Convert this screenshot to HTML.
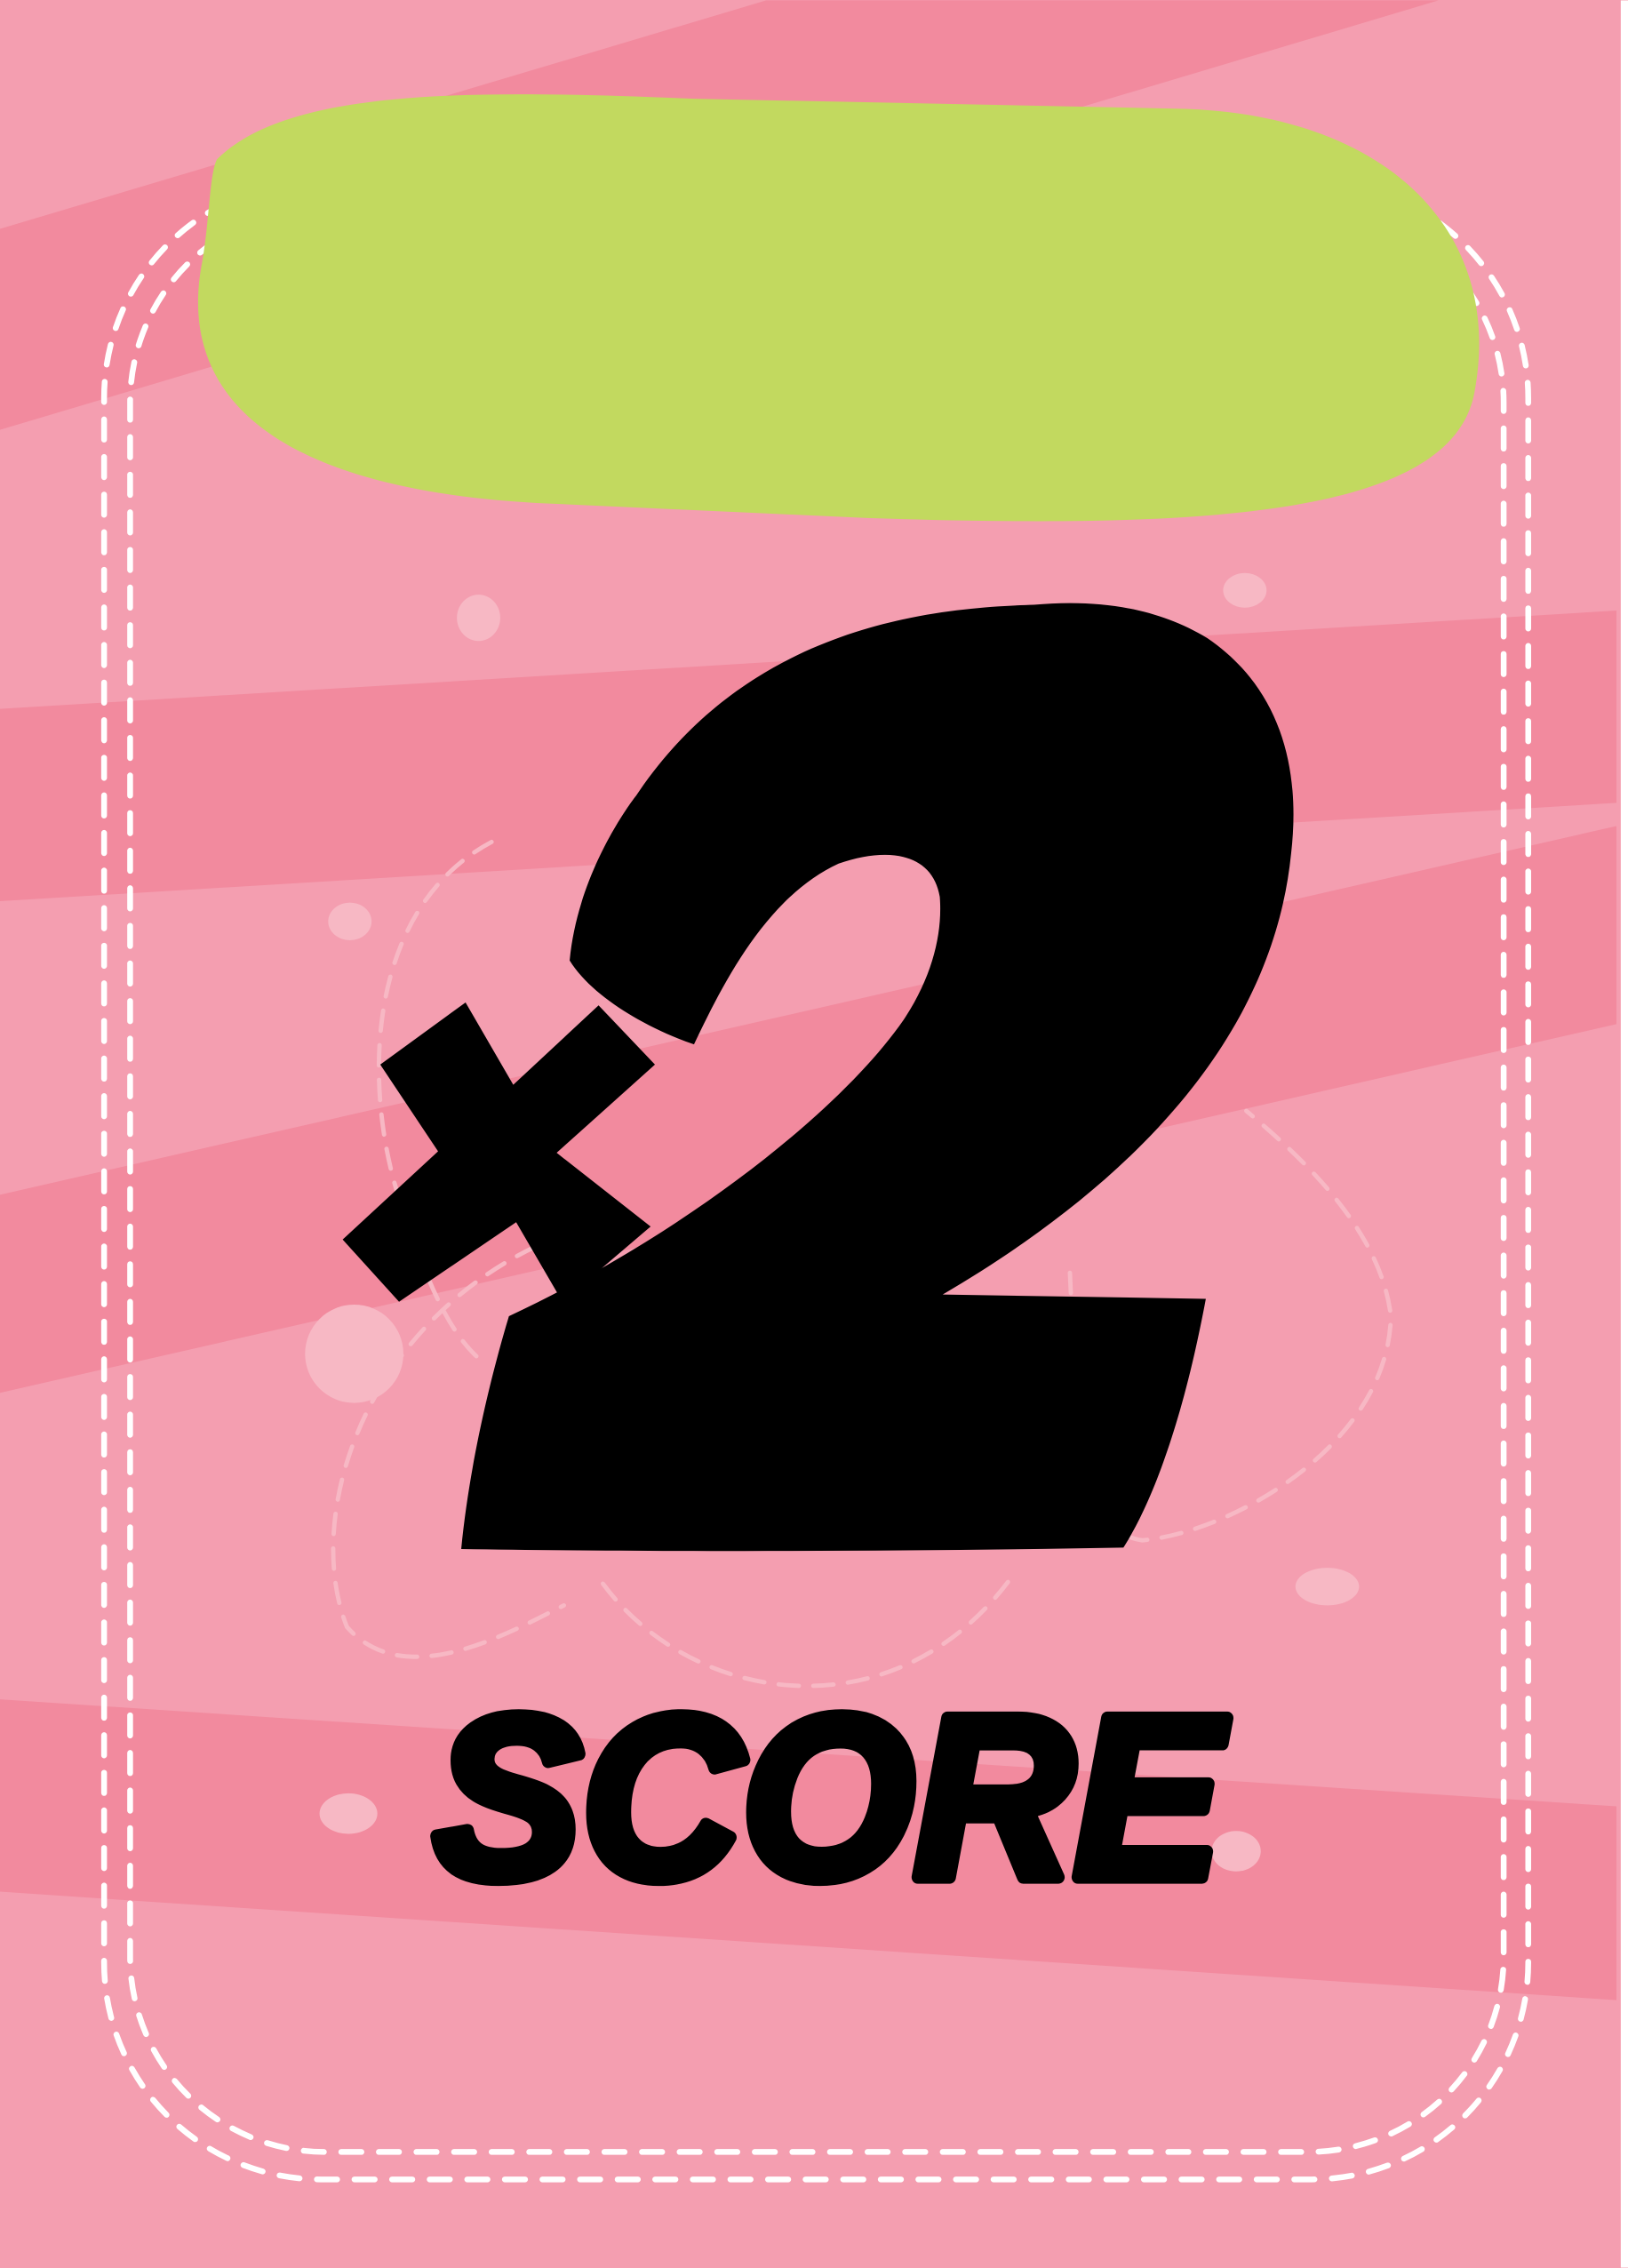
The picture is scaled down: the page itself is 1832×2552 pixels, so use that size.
<!DOCTYPE html>
<html><head><meta charset="utf-8"><style>html,body{margin:0;padding:0;background:#f49eb0}svg{display:block}</style></head>
<body>
<svg width="1832" height="2552" viewBox="0 0 1126 1568" xmlns="http://www.w3.org/2000/svg">
<rect width="1126" height="1568" fill="#f49eb0"/>
<g fill="#f28a9e">
<polygon points="0,158 530,0 995,0 0,297"/>
<polygon points="0,490 1118,422 1118,555 0,623"/>
<polygon points="0,826 1118,571 1118,708 0,963"/>
<polygon points="0,1175 1118,1249 1118,1383 0,1308"/>
</g>
<rect x="1121" y="0" width="5" height="1568" fill="#fff"/>
<g fill="#f7b8c4">
<ellipse cx="331" cy="427" rx="15" ry="16"/>
<ellipse cx="242" cy="637" rx="15" ry="13"/>
<circle cx="245" cy="936" r="34"/>
<ellipse cx="861" cy="408" rx="15" ry="12"/>
<ellipse cx="918" cy="1097" rx="22" ry="13"/>
<ellipse cx="241" cy="1254" rx="20" ry="14"/>
<ellipse cx="855" cy="1280" rx="17" ry="14"/>
</g>
<g fill="none" stroke="#f7b8c4" stroke-width="3" stroke-dasharray="14 10" stroke-linecap="round">
<path d="M340,582 C250,630 250,760 280,840 C300,900 315,925 332,940"/>
<path d="M370,862 C250,920 210,1050 240,1125 C280,1170 350,1130 390,1110"/>
<path d="M417,1095 C480,1180 620,1200 700,1090"/>
<path d="M740,880 C745,990 750,1060 790,1065 C850,1060 960,1000 962,910 C955,850 900,800 862,768"/>
</g>
<g fill="none" stroke="#fff" stroke-width="4" stroke-dasharray="14 12" stroke-linecap="round">
<rect x="72" y="125" width="985" height="1382" rx="150"/>
<rect x="90" y="143" width="950" height="1345" rx="135"/>
</g>
<path d="M150,110 C200,60 330,62 480,68 L820,75 C960,80 1040,160 1020,270 C1005,360 820,365 600,358 L380,348 C200,340 120,280 140,180 C145,150 145,120 150,110 Z" fill="#c2d95f"/>
<path d="M352,910 C470,855 580,770 625,705 C645,675 652,645 650,620 C645,590 615,585 580,597 C530,620 500,680 480,722 C450,712 410,690 394,664 C400,600 440,550 440,550 C520,430 650,420 715,418 C760,414 800,420 835,441 C885,475 900,530 893,590 C880,720 780,820 652,895 L834,898 C815,1000 790,1050 777,1070 C620,1073 450,1073 319,1071 C325,1010 340,950 352,910 Z" fill="#000"/>
<polygon points="263,736 322,693 355,750 414,695 453,736 385,797 450,848 389,900 357,845 276,900 237,857 303,796" fill="#000"/>
<text x="300" y="1298" font-family="Liberation Sans, sans-serif" font-weight="bold" font-style="italic" font-size="160" textLength="545" lengthAdjust="spacingAndGlyphs" fill="#000" stroke="#000" stroke-width="9" stroke-linejoin="round">SCORE</text>
</svg>
</body></html>
